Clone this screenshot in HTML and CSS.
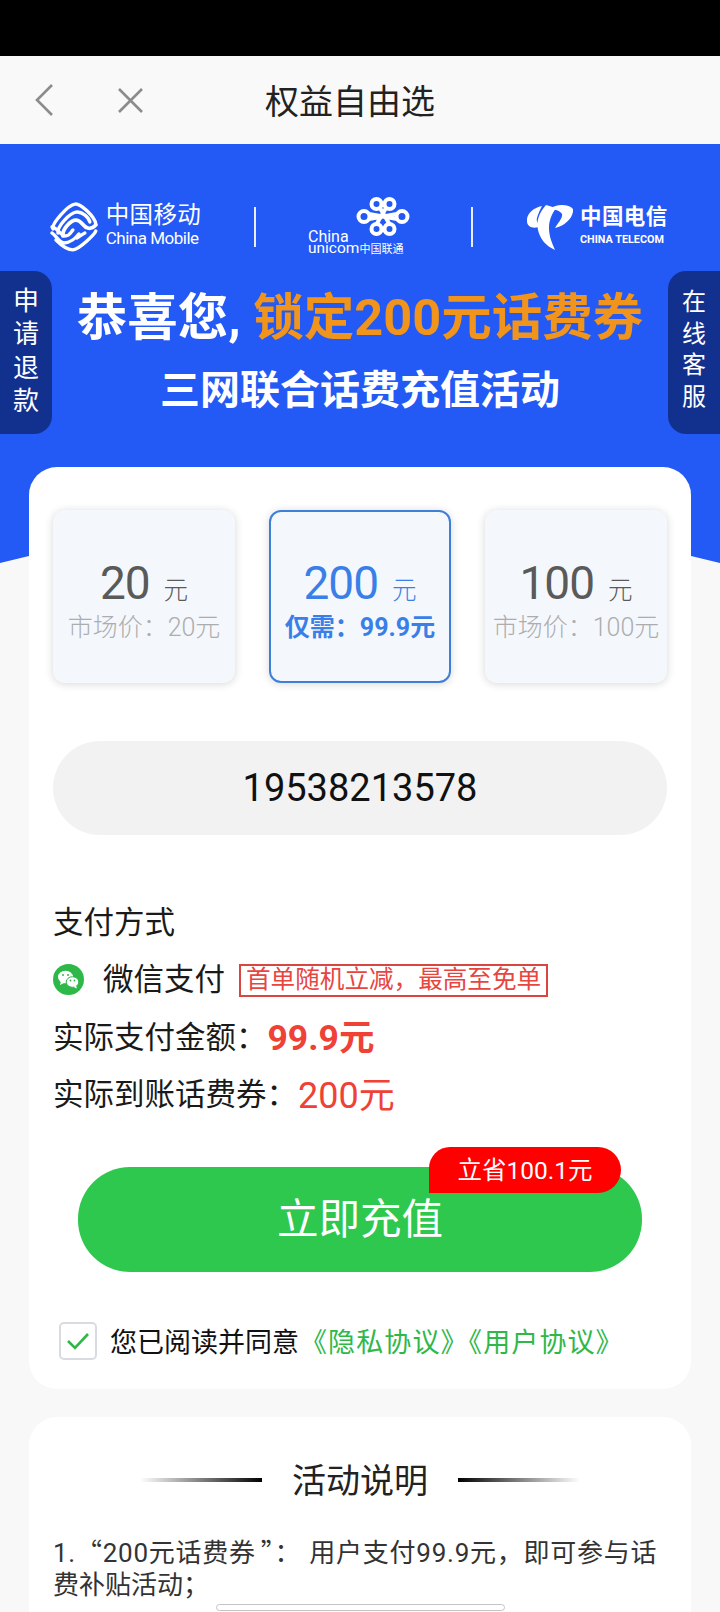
FILE: index.html
```html
<!DOCTYPE html>
<html lang="zh-CN">
<head>
    <meta charset="UTF-8">
    <title>权益自由选</title>
    <link rel="stylesheet" href="styles.css">
</head>
<body>
    <div class="status"></div>

    <div class="navbar">
        <svg class="nav-back" width="18" height="32" viewBox="0 0 18 32"><path d="M17 1 2 16l15 15" fill="none" stroke="#8c8c8c" stroke-width="2.6"/></svg>
        <svg class="nav-close" width="25" height="25" viewBox="0 0 25 25"><path d="M1 1l23 23M24 1 1 24" fill="none" stroke="#8c8c8c" stroke-width="2.6"/></svg>
        <div class="nav-title">权益自由选</div>
    </div>

    <div class="banner">
        <div class="logos">
            <div class="logo-mobile">
                <svg width="48" height="50" viewBox="0 0 48 50" fill="none" stroke="#fff" stroke-linecap="round">
                    <path stroke-width="3.4" d="M3 27C1 22 18 3 25 2c6-1 20 13 21 20"/>
                    <path stroke-width="3.4" d="M8 31C7 24 20 11 26 10c6-1 13 5 14 10"/>
                    <path stroke-width="3.8" d="M13 34C12 27 21 18 26 18c6 0 7 7 12 8 3 1 6-1 8-3"/>
                    <path stroke-width="3.4" d="M2 25c6 1 8 8 13 9 5 0 6-4 8-6"/>
                    <path stroke-width="3.4" d="M2 31c4 2 6 9 12 10 6 0 12-5 15-9"/>
                    <path stroke-width="3.4" d="M6 38c3 3 10 10 17 10 7-1 22-16 23-19"/>
                    <path stroke-width="3.4" d="M27 36c2-1 6-4 8-5"/>
                </svg>
                <div class="mobile-name">
                    <div class="mobile-cn">中国移动</div>
                    <div class="mobile-en">China Mobile</div>
                </div>
            </div>
            <div class="logo-line line-one"></div>
            <div class="logo-unicom">
                <svg class="unicom-knot" width="54" height="42" viewBox="0 0 54 42" fill="none" stroke="#fff" stroke-width="4">
                    <circle cx="20.500" cy="8" r="5"/>
                    <circle cx="33.500" cy="8" r="5"/>
                    <circle cx="20.500" cy="33" r="5"/>
                    <circle cx="33.500" cy="33" r="5"/>
                    <circle cx="8" cy="20.500" r="5.500"/>
                    <circle cx="46" cy="20.500" r="5.500"/>
                    <path d="M24 12 34 29M30 12 20 29M13 18l14 2.500 14-2.500M13 23l14-2.500 14 2.500"/>
                </svg>
                <div class="unicom-en">China</div>
                <div class="unicom-row">unicom<span class="unicom-cn">中国联通</span></div>
            </div>
            <div class="logo-line line-two"></div>
            <div class="logo-telecom">
                <svg width="46" height="47" viewBox="0 0 46 47" fill="#fff">
                    <path d="M15 3C5 5-1 12 0 19c1 7 10 7 15 3-4-1-6-3-5-7 1-4 3-8 5-12Z"/>
                    <path d="M21 7c8-7 21-6 25-1 1 8-8 17-18 19 3-5 8-10 7-14-2-4-8-5-14-4Z"/>
                    <path d="M19 2c-7 8-10 16-8 25 2 9 8 16 17 20-3-7-6-14-6-22 0-8 3-14 7-20Z"/>
                </svg>
                <div class="telecom-name">
                    <div class="telecom-cn">中国电信</div>
                    <div class="telecom-en">CHINA TELECOM</div>
                </div>
            </div>
        </div>

        <div class="headline-row">
            <div class="side-tab tab-left">申<br>请<br>退<br>款</div>
            <div class="headline">
                <div class="headline-one">恭喜您, <span class="orange">锁定200元话费券</span></div>
                <div class="headline-two">三网联合话费充值活动</div>
            </div>
            <div class="side-tab tab-right">在<br>线<br>客<br>服</div>
        </div>
    </div>

    <div class="card card-main">
        <div class="coupons">
            <div class="coupon">
                <div class="coupon-value">20<span class="coupon-unit">元</span></div>
                <div class="coupon-price">市场价：20元</div>
            </div>
            <div class="coupon coupon-on">
                <div class="coupon-value">200<span class="coupon-unit">元</span></div>
                <div class="coupon-price">仅需：99.9元</div>
            </div>
            <div class="coupon">
                <div class="coupon-value">100<span class="coupon-unit">元</span></div>
                <div class="coupon-price">市场价：100元</div>
            </div>
        </div>

        <div class="phone">19538213578</div>

        <div class="info-row">支付方式</div>
        <div class="info-row">
            <svg class="wechat" width="31" height="31" viewBox="0 0 31 31">
                <circle cx="15.500" cy="15.500" r="15.500" fill="#2fb84a"/>
                <ellipse cx="12.500" cy="13" rx="7.500" ry="6.300" fill="#fff"/>
                <path d="M8 17l-1 4 4-2Z" fill="#fff"/>
                <ellipse cx="19.500" cy="18" rx="6.300" ry="5.300" fill="#fff" stroke="#2fb84a"/>
                <path d="M23 21.500l1 3-3.500-1.500Z" fill="#fff"/>
                <circle cx="10" cy="11" r="1" fill="#2fb84a"/>
                <circle cx="15" cy="11" r="1" fill="#2fb84a"/>
                <circle cx="17.500" cy="16.500" r=".9" fill="#2fb84a"/>
                <circle cx="21.500" cy="16.500" r=".9" fill="#2fb84a"/>
            </svg>
            <span class="pay-name">微信支付</span>
            <span class="pay-tag">首单随机立减，最高至免单</span>
        </div>
        <div class="info-row">实际支付金额：<span class="money-bold">99.9元</span></div>
        <div class="info-row">实际到账话费券：<span class="money">200元</span></div>

        <div class="pay-btn">
            立即充值
            <div class="save-badge">立省100.1元</div>
        </div>

        <div class="agree">
            <div class="checkbox">
                <svg width="24" height="20" viewBox="0 0 24 20"><path d="M2 10l7 7L22 3" fill="none" stroke="#2fb84a" stroke-width="2.6"/></svg>
            </div>
            <span>您已阅读并同意</span>
            <span class="agree-links">《隐私协议》《用户协议》</span>
        </div>
    </div>

    <div class="card card-rules">
        <div class="rules-title">
            <div class="rule-line line-in"></div>
            <div class="rules-name">活动说明</div>
            <div class="rule-line line-out"></div>
        </div>
        <p class="rules-text"><span class="rules-first">1.<span class="cjk">“</span>200元话费券<span class="cjk quote-end">”：</span>用户支付99.9元，即可参与话</span><br>费补贴活动；</p>
    </div>

    <div class="home-bar"></div>
</body>
</html>
```

FILE: styles.css
```css
* {
    box-sizing: border-box;
}
html, body {
    margin: 0;
    height: 1612px;
    overflow: hidden;
}
body {
    position: relative;
    background-color: #f8f8f8;
    font-family: Roboto, "Noto Sans CJK SC", sans-serif;
    color: #1a1a1a;
}
.cjk {
    font-family: "Noto Sans CJK SC", sans-serif;
}

.status {
    height: 56px;
    background-color: #000;
}
.navbar {
    display: flex;
    align-items: center;
    height: 88px;
    background-color: #f9f9f9;
}
.nav-back {
    margin-left: 35px;
}
.nav-close {
    margin-left: 65px;
}
.nav-title {
    margin-left: 122px;
    margin-bottom: 2px;
    font-size: 34px;
    color: #222;
}

.banner {
    height: 419px;
    padding-top: 52px;
    background-color: #2359f5;
    color: #fff;
    clip-path: polygon(0 0, 100% 0, 100% 100%, 50% calc(100% - 87px), 0 100%);
}
.logos {
    display: flex;
    align-items: flex-start;
    height: 58px;
    padding-left: 50px;
}
.logo-mobile {
    display: flex;
    gap: 8px;
    width: 151px;
    margin-top: 6px;
}
.mobile-cn {
    font-size: 23.500px;
    line-height: 26px;
    letter-spacing: .3px;
    white-space: nowrap;
}
.mobile-en {
    font-size: 17px;
    line-height: 20px;
    letter-spacing: -.5px;
    white-space: nowrap;
}
.logo-line {
    width: 2px;
    height: 40px;
    margin-top: 11px;
    background-color: #e8eeff;
}
.line-one {
    margin-left: 53px;
}
.line-two {
    margin-left: 61px;
}
.logo-unicom {
    position: relative;
    width: 102px;
    height: 58px;
    margin-left: 52px;
}
.unicom-knot {
    position: absolute;
    top: 0;
    right: 0;
}
.unicom-en {
    padding-top: 34px;
    font-size: 16px;
    line-height: 13px;
}
.unicom-row {
    font-size: 15.500px;
    line-height: 11px;
    white-space: nowrap;
}
.unicom-cn {
    font-size: 11px;
}
.logo-telecom {
    display: flex;
    gap: 7px;
    margin-left: 54px;
    margin-top: 7px;
}
.telecom-cn {
    font-size: 21.500px;
    font-weight: 700;
    line-height: 28px;
    letter-spacing: .4px;
    white-space: nowrap;
}
.telecom-en {
    margin-top: 3px;
    font-size: 10.800px;
    font-weight: 700;
    line-height: 12px;
    white-space: nowrap;
}

.headline-row {
    display: flex;
    margin-top: 17px;
}
.side-tab {
    flex: none;
    width: 52px;
    height: 163px;
    background-color: #12318f;
    text-align: center;
}
.tab-left {
    padding-top: 14px;
    border-radius: 0 18px 18px 0;
    font-size: 26px;
    line-height: 33.300px;
}
.tab-right {
    padding-top: 16px;
    border-radius: 18px 0 0 18px;
    font-size: 24px;
    line-height: 31.500px;
}
.headline {
    flex: 1;
    text-align: center;
}
.headline-one {
    margin-top: 13px;
    font-size: 50.500px;
    font-weight: 700;
    line-height: 68px;
    white-space: nowrap;
}
.orange {
    color: #f0941c;
}
.headline-two {
    margin-top: 11px;
    font-size: 40px;
    font-weight: 700;
    line-height: 56px;
}

.card {
    margin: 0 29px;
    padding: 0 24px;
    background-color: #fff;
    border-radius: 28px;
}
.card-main {
    position: relative;
    height: 922px;
    margin-top: -96px;
    padding-top: 43px;
}
.coupons {
    display: grid;
    grid-template-columns: repeat(3, 182px);
    gap: 34px;
}
.coupon {
    height: 173px;
    padding-top: 46px;
    background-color: #f4f8fd;
    border-radius: 12px;
    box-shadow: 0 1px 8px rgba(0, 0, 0, .16);
    text-align: center;
}
.coupon-value {
    font-size: 46px;
    letter-spacing: -1px;
    line-height: 54px;
    color: #5a5a5a;
}
.coupon-unit {
    margin-left: 14px;
    font-size: 24.500px;
    font-weight: 300;
    letter-spacing: 0;
}
.coupon-price {
    margin-top: -8px;
    font-size: 25px;
    font-weight: 300;
    line-height: 36px;
    color: #adadad;
    white-space: nowrap;
}
.coupon-on {
    padding-top: 44px;
    border: 2px solid #3f80d6;
}
.coupon-on .coupon-value {
    color: #3a7fe8;
}
.coupon-on .coupon-price {
    font-weight: 700;
    color: #3a7fe8;
}

.phone {
    height: 94px;
    margin-top: 58px;
    margin-bottom: 56px;
    background-color: #f2f2f2;
    border-radius: 47px;
    font-size: 38px;
    line-height: 94px;
    color: #111;
    text-align: center;
}
.info-row {
    display: flex;
    align-items: center;
    height: 57.500px;
    font-size: 30.500px;
    color: #1a1a1a;
    white-space: nowrap;
}
.wechat {
    margin-top: 5px;
}
.pay-name {
    margin-left: 19px;
}
.pay-tag {
    height: 33px;
    margin-top: 6px;
    margin-left: 14px;
    padding: 0 5px;
    border: 2px solid #d9453f;
    font-size: 24.600px;
    line-height: 27px;
    color: #e8453f;
}
.money-bold {
    margin-left: 1px;
    font-size: 35.500px;
    font-weight: 700;
    color: #ef4136;
}
.money {
    margin-left: 1px;
    font-size: 36px;
    color: #ef4136;
}

.pay-btn {
    position: relative;
    height: 105px;
    margin: 46px 25px 0;
    background-color: #2dc84d;
    border-radius: 52px;
    font-size: 41.500px;
    line-height: 105px;
    color: #fff;
    text-align: center;
}
.save-badge {
    position: absolute;
    top: -20px;
    right: 21px;
    width: 192px;
    height: 46px;
    background-color: #f00;
    border-radius: 22px 24px 24px 0;
    font-size: 24.500px;
    line-height: 48px;
}
.agree {
    display: flex;
    align-items: center;
    margin-top: 49px;
    padding-left: 6px;
    font-size: 27px;
    color: #111;
    white-space: nowrap;
}
.checkbox {
    display: flex;
    align-items: center;
    justify-content: center;
    width: 38px;
    height: 38px;
    margin-right: 13px;
    background-color: #fff;
    border: 2px solid #d8dce2;
    border-radius: 5px;
}
.agree-links {
    margin-left: 1px;
    letter-spacing: 1.100px;
    color: #2fb84a;
}

.card-rules {
    margin-top: 28px;
    padding-top: 43px;
    padding-bottom: 40px;
}
.rules-title {
    display: flex;
    align-items: center;
    justify-content: center;
    gap: 30px;
    height: 40px;
    font-size: 34px;
    color: #222;
}
.rules-name {
    margin-top: -4px;
}
.rule-line {
    width: 122px;
    height: 4px;
}
.line-in {
    background-image: linear-gradient(to right, rgba(0, 0, 0, 0), #000);
}
.line-out {
    background-image: linear-gradient(to left, rgba(0, 0, 0, 0), #000);
}
.rules-text {
    margin: 35px 0 0;
    font-size: 26px;
    line-height: 32px;
    color: #333;
    white-space: nowrap;
}
.rules-first {
    letter-spacing: .75px;
}
.quote-end {
    margin-left: 5px;
    margin-right: 8px;
}

.home-bar {
    position: absolute;
    left: 216px;
    bottom: 1px;
    width: 289px;
    height: 7px;
    background-color: #fff;
    border: 1px solid #c4c4c4;
    border-radius: 4px;
}
```
